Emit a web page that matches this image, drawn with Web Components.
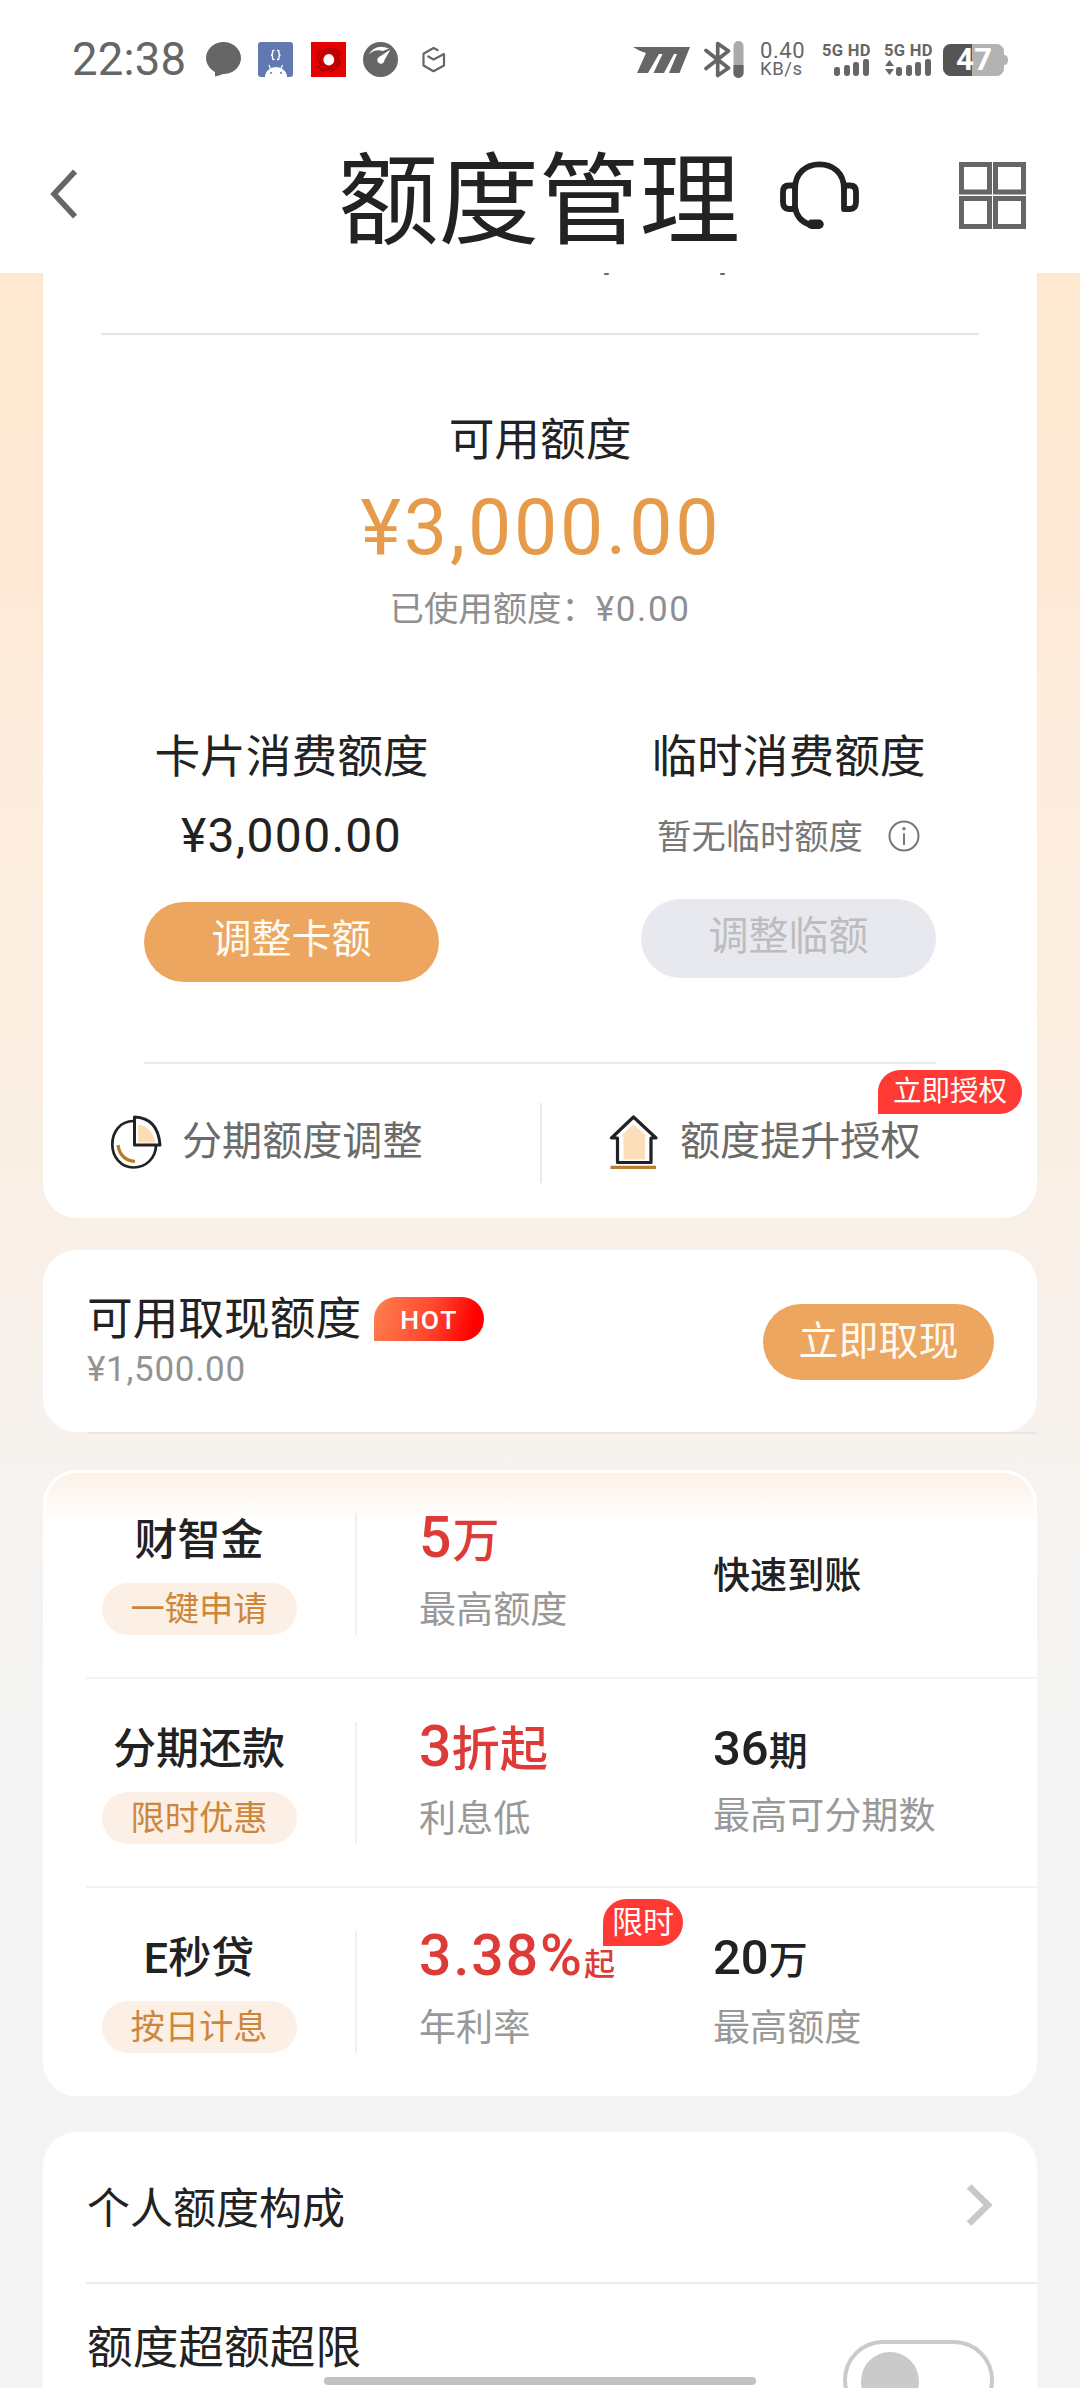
<!DOCTYPE html>
<html lang="zh-CN">
<head>
<meta charset="utf-8">
<title>额度管理</title>
<style>
html,body{margin:0;padding:0}
body{width:1080px;height:2388px;overflow:hidden;font-family:Roboto,"Noto Sans CJK SC",sans-serif;color:#222}
</style>
</head>
<body>
<limit-page></limit-page>
<script>
const define = (name, html) => {
  const tpl = document.createElement('template');
  tpl.innerHTML = html;
  customElements.define(name, class extends HTMLElement {
    constructor() {
      super();
      this.attachShadow({ mode: 'open' }).appendChild(tpl.content.cloneNode(true));
    }
  });
};

define('signal-bars', `
<style>
:host{display:flex;flex-direction:column;width:47px;height:34px;color:#666}
b{font:700 16.5px/15px Roboto,sans-serif;white-space:nowrap;letter-spacing:.35px}
.r{display:flex;align-items:flex-end;justify-content:flex-end;gap:3.6px;height:17px;margin-top:1px}
i{width:6px;border-radius:2.4px;background:#666}
</style>
<b><slot></slot></b>
<div class="r"><slot name="arrows"></slot><i style="height:9px"></i><i style="height:11px"></i><i style="height:14px"></i><i style="height:17px"></i></div>`);

define('status-bar', `
<style>
:host{display:flex;align-items:center;box-sizing:border-box;height:117px;padding:2px 72px 0 72px;color:#666}
.time{font-size:45.500px;line-height:50px;width:117px;margin-right:17px;letter-spacing:.2px}
svg{display:block;flex:none}
.apps{display:flex;gap:17.4px;align-items:center}
.right{display:flex;align-items:center;margin-left:auto}
.net{display:flex;flex-direction:column;width:46px;margin:0 16px 0 16px;white-space:nowrap}
.net .n{font-size:22px;line-height:18px;letter-spacing:.6px}
.net .u{font-size:18.500px;letter-spacing:.6px;line-height:18px}
.bat{width:65px;height:34px;margin-left:12px;position:relative}
.bat span{position:absolute;left:13px;top:0;font:700 31px/34px Roboto,sans-serif;color:#fff;letter-spacing:.5px}
</style>
<span class="time">22:38</span>
<div class="apps">
 <svg width="35" height="35" viewBox="0 0 35 35"><ellipse cx="17.5" cy="16" rx="17.5" ry="16" fill="#666"/><path d="M9 28v6.5q6-1 11-4z" fill="#666"/></svg>
 <svg width="35" height="35" viewBox="0 0 35 35"><rect width="35" height="35" rx="3" fill="#6179b0"/><path d="M7 35a11 10 0 0 1 22 0z" fill="#fff"/><path d="M12.5 27l-1.5-4M23 27l1.500-4" stroke="#fff" stroke-width="1.200"/><circle cx="13" cy="31" r="1" fill="#6179b0"/><circle cx="23" cy="31" r="1" fill="#6179b0"/><path d="M16.500 8.500h-1q-1 0-1 1.500v1.500q0 1.500-1.500 1.500 1.500 0 1.500 1.500v1.500q0 1.500 1 1.500h1M19 8.500h1q1 0 1 1.500v1.500q0 1.500 1.500 1.500-1.500 0-1.500 1.500v1.500q0 1.500-1 1.500h-1" fill="none" stroke="#fff" stroke-width="1.400"/></svg>
 <svg width="35" height="35" viewBox="0 0 35 35"><rect width="35" height="35" fill="#e60000"/><g fill="none" stroke="#960000" stroke-width="1.500" opacity=".8"><path d="M17 9Q25 8 29 14M24 12q6 4 5 11M26 19q0 8-7 11M20 26q-7 4-13-2M12 24Q5 20 8 12M10 16Q11 8 19 6"/><path d="M15 7Q24 5 31 12M27 15q3 7-3 13M22 24q-6 6-13 4M9 21Q4 14 11 7" stroke="#b00000" stroke-width="2"/></g><circle cx="17.800" cy="17.600" r="9" fill="#b40000" opacity=".5"/><ellipse cx="17.800" cy="17.700" rx="5.400" ry="5.700" fill="#fff"/></svg>
 <svg width="35" height="35" viewBox="0 0 35 35"><circle cx="17.500" cy="17.500" r="17.500" fill="#666"/><path d="M5.500 12.500Q13 1 26 6.500L20 9Q12 6.500 5.500 12.500z" fill="#fff"/><path d="M27.500 7.500L21.500 18a3.600 3.600 0 1 1-5.500-3z" fill="#fff"/></svg>
 <svg width="35" height="35" viewBox="0 0 35 35"><path d="M22.500 8.500L17.500 6 7.500 11.800v11.700l10 5.700 10.500-5.700V12L17.500 17.500 11.500 14" fill="none" stroke="#666" stroke-width="2.200" stroke-linejoin="round"/></svg>
</div>
<div class="right">
 <svg width="57" height="26" viewBox="0 0 57 26"><path d="M0 0H57L46.500 26H36L44 7H41L31 26H20.500L29.500 7H26L15 26H4L13 6Q6 4 0 0z" fill="#666"/></svg>
 <svg width="40" height="37" viewBox="0 0 40 37" style="margin-left:14px"><path d="M2 9.500L24.500 27 13.700 34.500V2.500L24.500 10 2 27.500" fill="none" stroke="#666" stroke-width="3.700" stroke-linejoin="round" stroke-linecap="round"/><rect x="29.500" y="0" width="10" height="37" rx="5" fill="#aaa"/><path d="M29.500 24h10v8a5 5 0 0 1-10 0z" fill="#666"/></svg>
 <div class="net"><span class="n">0.40</span><span class="u">KB/s</span></div>
 <signal-bars>5G HD</signal-bars>
 <signal-bars style="margin-left:15px">5G HD<svg slot="arrows" width="9" height="17" viewBox="0 0 9 17" style="margin-right:-1px"><path d="M0 7L4.500 1 9 7zM0 10h9l-4.500 6z" fill="#666"/></svg></signal-bars>
 <div class="bat"><svg width="65" height="34" viewBox="0 0 65 34"><rect x="0" y="1" width="61" height="32" rx="7.500" fill="#b3b3b3"/><path d="M29 1H8a8 8 0 0 0-8 8v16a8 8 0 0 0 8 8h21z" fill="#555"/><path d="M61 12q4 0 4 5t-4 5z" fill="#b3b3b3"/></svg><span>47</span></div>
</div>`);

define('nav-header', `
<style>
:host{display:flex;align-items:center;height:156px;background:#fff;padding-left:50px}
h1{font-weight:400;font-size:100.500px;line-height:120px;margin:14px 40px 0 261px;white-space:nowrap;color:#222}
svg{display:block;flex:none}
</style>
<svg width="27" height="50" viewBox="0 0 27 50" style="margin-top:-2px"><path d="M25 2.500L4 25 25 47.500" fill="none" stroke="#666" stroke-width="5.500"/></svg>
<h1><slot></slot></h1>
<svg width="79" height="68" viewBox="0 0 79 68"><g fill="none" stroke="#222" stroke-width="5.800" stroke-linecap="round" stroke-linejoin="round"><path d="M15 24.500H9Q3 24.500 3 31v10q0 7 6 7h6zM64 24.500h6q6 0 6 6.500v10q0 7-6 7h-6z"/><path d="M15 28C15 12 26 3.400 39.500 3.400S64 12 64 28M15 46Q17 59 29 63.500"/></g><path d="M31.500 63.300h7.500" stroke="#222" stroke-width="9.400" stroke-linecap="round"/></svg>
<svg width="67" height="67" viewBox="0 0 67 67" style="margin-left:100px"><g fill="none" stroke="#666" stroke-width="5"><path d="M2.500 2.500h28v27.500h-28zM36.500 2.500h28v27.500h-28zM2.500 36.500h28v28h-28zM36.500 36.500h28v28h-28z"/></g></svg>`);

define('pill-button', `
<style>
:host{display:flex;justify-content:center;box-sizing:border-box;width:295px;height:79.500px;border-radius:40px;background:#eca65f;color:#fffaf2;font-size:40px;line-height:76px;white-space:nowrap}
:host([disabled]){background:#e8e9ee;color:#bdbdbf}
:host([compact]){width:231px;height:76px;line-height:76px}
</style><slot></slot>`);

define('corner-badge', `
<style>
:host{display:flex;justify-content:center;align-items:center;border-radius:24px 24px 24px 0;background:#ff3a35;color:#fff;white-space:nowrap}
</style><slot></slot>`);

define('quota-column', `
<style>
:host{display:flex;flex-direction:column;align-items:center;flex:1}
.t{font-size:45.700px;line-height:60px}
.v{height:48px;line-height:48px;margin:24px 0 var(--gap,42px);display:flex;align-items:center}
</style>
<div class="t"><slot name="title"></slot></div>
<div class="v"><slot name="value"></slot></div>
<slot></slot>`);

define('quick-link', `
<style>
:host{display:flex;align-items:center;color:#6b6b6b;font-size:40.100px;line-height:54px;white-space:nowrap}
::slotted(svg){flex:none}
</style><slot name="icon"></slot><slot></slot>`);

define('quota-card', `
<style>
:host{display:block;height:945px;margin:0 43px;background:#fff;border-radius:0 0 34px 34px;position:relative}
.peek{display:flex;height:1.500px;padding:0 0 58.500px 561px}
.peek i{width:5px;height:1.500px;background:#666;border-radius:1px}
.peek i+i{margin-left:111px}
.rule{height:2px;background:#e4e4e4;margin:0 58px}
.c{text-align:center;white-space:nowrap}
.cap{font-size:45.700px;line-height:60px;margin-top:76px}
.amt{font-size:77px;line-height:80px;margin-top:17px;color:#e69b4b;letter-spacing:2.800px;text-indent:2px}
.used{font-size:34.400px;line-height:44px;margin-top:19px;color:#8f8f8f}
.used span{font-size:35px;letter-spacing:1.600px}
.cols{display:flex;box-sizing:border-box;height:430px;padding-top:96px}
.m{font-size:48px;letter-spacing:1.300px}
.none{font-size:34.300px;color:#777;margin-right:25px;padding-top:2px}
.links{display:flex;align-items:center;height:155px}
.vr{width:2px;height:80px;background:#e9ebec;margin-top:3px}
corner-badge{position:absolute;left:835px;top:797px;width:144px;height:44px;font-size:28.500px;line-height:44px}
</style>
<div class="peek"><i></i><i></i></div>
<div class="rule"></div>
<div class="c cap">可用额度</div>
<div class="c amt">¥3,000.00</div>
<div class="c used">已使用额度：<span>¥0.00</span></div>
<div class="cols">
 <quota-column><span slot="title">卡片消费额度</span><span slot="value" class="m">¥3,000.00</span><pill-button>调整卡额</pill-button></quota-column>
 <quota-column style="--gap:38.500px"><span slot="title">临时消费额度</span><span slot="value" class="none">暂无临时额度</span>
 <svg slot="value" width="32" height="32" viewBox="0 0 32 32"><circle cx="16" cy="16" r="14.500" fill="none" stroke="#777" stroke-width="2"/><circle cx="16" cy="8.800" r="1.700" fill="#777"/><path d="M16 13.500v11.500" stroke="#777" stroke-width="2"/></svg>
 <pill-button disabled>调整临额</pill-button></quota-column>
</div>
<div class="rule" style="margin:0 101px;background:#e9ebeb"></div>
<div class="links">
 <quick-link style="padding-left:67px;width:430px">
  <svg slot="icon" width="52" height="54" viewBox="0 0 52 54" style="margin-right:20px"><path d="M23.500 6C10 6 2.300 17 2.300 29.500S11 52.500 23.500 52.500 46 43 46 30" fill="none" stroke="#202226" stroke-width="2.700"/><path d="M24.500 2Q48 3 50 30H24.500z" fill="#fff" stroke="#202226" stroke-width="3" stroke-linejoin="round"/><path d="M28 9.500Q42 12 45.500 27.500H28z" fill="#fbdcb5"/><path d="M8 30Q10 45 25 46.500" fill="none" stroke="#b97d1f" stroke-width="3.200"/></svg>
  分期额度调整</quick-link>
 <div class="vr"></div>
 <quick-link style="padding-left:67px">
  <svg slot="icon" width="49" height="54" viewBox="0 0 49 54" style="margin-right:22px"><path d="M24.500 2L2.500 23H8.500V47.500H42V23h5z" fill="#fff" stroke="#202226" stroke-width="3.200" stroke-linejoin="round"/><path d="M24.500 9.500L11.500 21.500H14.500V44.500H36V21.500H38.500z" fill="#fbdfba"/><path d="M1.500 52.300H47" stroke="#b97d2c" stroke-width="3.300"/></svg>
  额度提升授权</quick-link>
</div>
<corner-badge>立即授权</corner-badge>`);

define('cash-card', `
<style>
:host{display:block}
.card{display:flex;justify-content:space-between;box-sizing:border-box;height:182px;margin:32px 43px 0;padding:43px 43px 0 44px;background:#fff;border-radius:34px}
.t{display:flex;font-size:45.700px;line-height:53px;white-space:nowrap}
.a{font-size:35px;line-height:48px;color:#939393;letter-spacing:.7px}
corner-badge{width:110px;height:44px;margin:4px 0 0 13px;background:linear-gradient(105deg,#ff7c4d 5%,#ff4a30 50%,#ff0000 88%);font-size:26.500px;font-weight:500;letter-spacing:1.800px}
pill-button{margin-top:11px}
.line{height:2px;margin:0 43px 0 87px;background:#ebe7e4}
</style>
<div class="card"><div><div class="t">可用取现额度<corner-badge>HOT</corner-badge></div><div class="a">¥1,500.00</div></div><pill-button compact>立即取现</pill-button></div>
<div class="line"></div>`);

define('offer-row', `
<style>
:host{display:grid;grid-template-columns:312px 64px 294px 1fr;height:207px;position:relative;white-space:nowrap}
.n{display:flex;flex-direction:column;align-items:center}
.name{font-size:43px;font-weight:500;line-height:54px;margin-top:43px}
.tag{display:flex;justify-content:center;width:195px;height:52px;margin-top:16px;border-radius:26px;background:#fcefe5;color:#cd873b;font-size:34.300px;line-height:53px}
.v{width:2px;height:122px;margin-top:43px;background:#f0f0f0}
.big{font-size:57px;font-weight:500;height:60px;line-height:60px;margin-top:38px;color:#dc3b38}
.sub{font-size:37.100px;line-height:48px;margin-top:19px;color:#999}
.mid{font-size:49px;font-weight:500;height:60px;line-height:60px;margin-top:40px}
.mid+.sub{margin-top:var(--sub,17px)}
</style>
<div class="n"><div class="name"><slot name="name"></slot></div><div class="tag"><slot name="tag"></slot></div></div>
<div class="v"></div>
<div><div class="big"><slot name="big"></slot></div><div class="sub"><slot name="sub"></slot></div></div>
<div><div class="mid"><slot name="mid"></slot></div><div class="sub"><slot name="sub2"></slot></div></div>
<slot></slot>`);

define('offers-card', `
<style>
:host{display:block;box-sizing:border-box;height:626px;margin:36px 43px 0;border-radius:34px;background:linear-gradient(#fdf0e5,#fff 50px);box-shadow:inset 0 0 0 3px #fff}
hr{border:0;height:2px;margin:0 0 0 43px;background:#f3f3f3}
.s,.k,.w,.q{line-height:0}
.w{font-size:47px;margin-left:1px}
.q{font-size:31px}
.s{font-size:48.300px}
.k{font-size:39px}
corner-badge{position:absolute;left:560px;top:11px;width:80px;height:47px;font-size:31px;line-height:47px}
</style>
<offer-row><span slot="name">财智金</span><span slot="tag">一键申请</span><span slot="big">5<span class="w">万</span></span><span slot="sub">最高额度</span><span slot="mid" style="display:block;font-size:37.100px;padding-top:37px">快速到账</span></offer-row>
<hr>
<offer-row style="--sub:14px"><span slot="name">分期还款</span><span slot="tag">限时优惠</span><span slot="big">3<span class="s">折起</span></span><span slot="sub">利息低</span><span slot="mid">36<span class="k">期</span></span><span slot="sub2">最高可分期数</span></offer-row>
<hr>
<offer-row><span slot="name">E秒贷</span><span slot="tag">按日计息</span><span slot="big"><span style="letter-spacing:2px">3.38%</span><span class="q">起</span></span><span slot="sub">年利率</span><span slot="mid">20<span class="k">万</span></span><span slot="sub2">最高额度</span><corner-badge>限时</corner-badge></offer-row>`);

define('settings-card', `
<style>
:host{display:block;height:300px;margin:36px 43px 0;border-radius:34px 34px 0 0;background:#fff}
.a{display:flex;align-items:center;justify-content:space-between;height:150px;padding:0 44px;font-size:43px;line-height:60px}
.a span{padding-top:3px}
hr{border:0;height:2px;margin:0 0 0 43px;background:#ececec}
.b{display:flex;justify-content:space-between;padding:35px 43px 0 44px;font-size:45.700px;line-height:60px}
.sw{box-sizing:border-box;width:151px;height:80px;border:4px solid #cacaca;border-radius:40px;margin-top:21px;padding:8px 0 0 14px}
.sw i{display:block;width:58px;height:58px;border-radius:50%;background:#cacaca}
</style>
<div class="a"><span>个人额度构成</span><svg width="28" height="42" viewBox="0 0 28 42" style="margin-top:-4px"><path d="M4 2.500L23 21 4 39.500" fill="none" stroke="#c8c8c8" stroke-width="6.500"/></svg></div>
<hr>
<div class="b"><span>额度超额超限</span><div class="sw"><i></i></div></div>`);

define('limit-page', `
<style>
:host{display:block;position:relative;width:1080px;height:2388px;overflow:hidden;background:#fff}
.body{height:2115px;background:linear-gradient(#fee8cf 0,#fde9d6 300px,#fdecdd 450px,#fbeee1 750px,#f9f0e7 950px,#f7f2ee 1150px,#f5f4f3 1400px,#f4f4f5 1500px)}
.home{position:absolute;left:324px;top:2377px;width:432px;height:8px;border-radius:4px;background:#c2c2c2}
</style>
<status-bar></status-bar>
<nav-header>额度管理</nav-header>
<div class="body"><quota-card></quota-card><cash-card></cash-card><offers-card></offers-card><settings-card></settings-card></div>
<div class="home"></div>`);
</script>
</body>
</html>
